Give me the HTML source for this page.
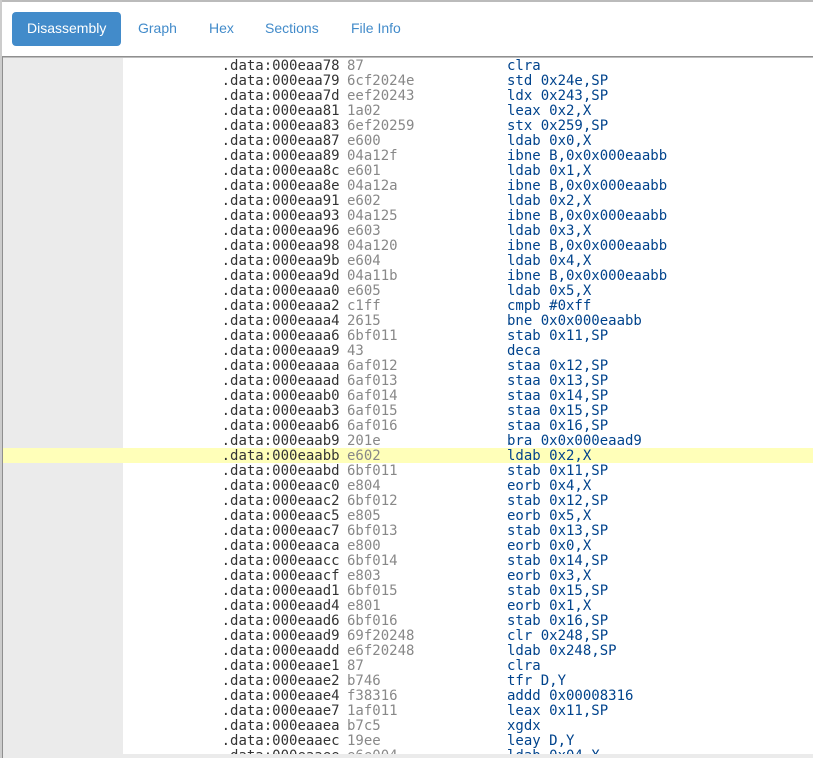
<!DOCTYPE html>
<html><head><meta charset="utf-8"><style>
html,body{margin:0;padding:0;width:813px;height:758px;overflow:hidden;background:#fff}
.a{position:absolute}
.tab{position:absolute;top:12px;height:34px;font:14px/32px "Liberation Sans",sans-serif;color:#428bca;white-space:pre}
#v{position:absolute;left:3px;top:58px;width:810px;height:696px;overflow:hidden;background:#fff}
#s{position:absolute;left:0;top:0;width:120px;height:696px;background:#ebebeb}
#h{position:absolute;left:0;top:390px;width:810px;height:15px;background:#ffffb9}
pre{position:absolute;margin:0;top:1px;font:14px/15px "DejaVu Sans Mono",monospace}
</style></head><body>
<div class="a" style="left:0;top:0;width:813px;height:2px;background:#bbb"></div>
<div class="a" style="left:0;top:0;width:2px;height:758px;background:#ccc"></div>
<div class="a" style="left:12px;top:12px;width:109px;height:34px;background:#428bca;border-radius:4px"></div>
<div class="tab" style="left:27px;color:#fff">Disassembly</div>
<div class="tab" style="left:138px">Graph</div>
<div class="tab" style="left:209px">Hex</div>
<div class="tab" style="left:265px">Sections</div>
<div class="tab" style="left:351px">File Info</div>
<div class="a" style="left:2px;top:56px;width:811px;height:1px;background:#8f8f8f"></div>
<div class="a" style="left:2px;top:57px;width:811px;height:1px;background:#bdbdbd"></div>
<div class="a" style="left:2px;top:56px;width:1px;height:702px;background:#8f8f8f"></div>
<div class="a" style="left:3px;top:754px;width:810px;height:4px;background:#ebebeb"></div>
<div id="v"><div id="s"></div><div id="h"></div>
<pre style="left:218.6px;color:#333">.data:000eaa78
.data:000eaa79
.data:000eaa7d
.data:000eaa81
.data:000eaa83
.data:000eaa87
.data:000eaa89
.data:000eaa8c
.data:000eaa8e
.data:000eaa91
.data:000eaa93
.data:000eaa96
.data:000eaa98
.data:000eaa9b
.data:000eaa9d
.data:000eaaa0
.data:000eaaa2
.data:000eaaa4
.data:000eaaa6
.data:000eaaa9
.data:000eaaaa
.data:000eaaad
.data:000eaab0
.data:000eaab3
.data:000eaab6
.data:000eaab9
.data:000eaabb
.data:000eaabd
.data:000eaac0
.data:000eaac2
.data:000eaac5
.data:000eaac7
.data:000eaaca
.data:000eaacc
.data:000eaacf
.data:000eaad1
.data:000eaad4
.data:000eaad6
.data:000eaad9
.data:000eaadd
.data:000eaae1
.data:000eaae2
.data:000eaae4
.data:000eaae7
.data:000eaaea
.data:000eaaec
.data:000eaaee</pre>
<pre style="left:344px;color:#888">87
6cf2024e
eef20243
1a02
6ef20259
e600
04a12f
e601
04a12a
e602
04a125
e603
04a120
e604
04a11b
e605
c1ff
2615
6bf011
43
6af012
6af013
6af014
6af015
6af016
201e
e602
6bf011
e804
6bf012
e805
6bf013
e800
6bf014
e803
6bf015
e801
6bf016
69f20248
e6f20248
87
b746
f38316
1af011
b7c5
19ee
e6e004</pre>
<pre style="left:504px;color:#00438c">clra
std 0x24e,SP
ldx 0x243,SP
leax 0x2,X
stx 0x259,SP
ldab 0x0,X
ibne B,0x0x000eaabb
ldab 0x1,X
ibne B,0x0x000eaabb
ldab 0x2,X
ibne B,0x0x000eaabb
ldab 0x3,X
ibne B,0x0x000eaabb
ldab 0x4,X
ibne B,0x0x000eaabb
ldab 0x5,X
cmpb #0xff
bne 0x0x000eaabb
stab 0x11,SP
deca
staa 0x12,SP
staa 0x13,SP
staa 0x14,SP
staa 0x15,SP
staa 0x16,SP
bra 0x0x000eaad9
ldab 0x2,X
stab 0x11,SP
eorb 0x4,X
stab 0x12,SP
eorb 0x5,X
stab 0x13,SP
eorb 0x0,X
stab 0x14,SP
eorb 0x3,X
stab 0x15,SP
eorb 0x1,X
stab 0x16,SP
clr 0x248,SP
ldab 0x248,SP
clra
tfr D,Y
addd 0x00008316
leax 0x11,SP
xgdx
leay D,Y
ldab 0x04,X</pre>
</div>
</body></html>
